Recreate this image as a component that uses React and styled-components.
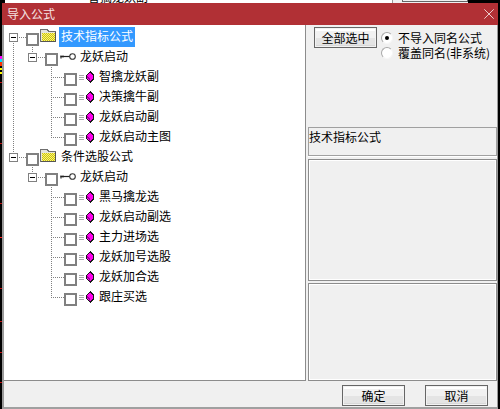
import React from 'react'
import styled, { createGlobalStyle } from 'styled-components'

const GlobalStyle = createGlobalStyle`
  html, body {
    margin: 0;
    padding: 0;
    background: #000;
    overflow: hidden;
  }
  * {
    box-sizing: border-box;
  }
`

const Screen = styled.div`
  width: 500px;
  height: 409px;
  display: flex;
  flex-direction: column;
  background: #000;
  font-family: "Noto Sans CJK SC", "Liberation Sans", sans-serif;
  font-size: 12px;
  color: #000;
  overflow: hidden;
`

/* what peeks out above the dialog */
const BehindStrip = styled.div`
  height: 3px;
  display: flex;
  align-items: flex-end;
  overflow: hidden;
  flex: none;
`
const BehindWhite = styled.div`
  width: 387px;
  margin-left: 5px;
  height: 3px;
  background: #fff;
  display: flex;
  align-items: flex-end;
  padding-left: 83px;
`
const BehindText = styled.span`
  line-height: 12px;
  height: 12px;
  flex: none;
`
const BehindGrey = styled.div`
  width: 76px;
  height: 3px;
  background: #f0f0f0;
  border-left: 1px solid #999;
  padding-left: 9px;
`
const BehindButton = styled.div`
  width: 66px;
  height: 2px;
  border: 1px solid #666;
  border-top: 0;
`

const Desk = styled.div`
  flex: 1;
  display: flex;
  min-height: 0;
`
const Rail = styled.div`
  width: 2px;
  flex: none;
  display: flex;
  flex-direction: column;
`
const RailMark = styled.div`
  height: ${p => p.$h}px;
  margin-top: ${p => p.$gap}px;
  background: ${p => p.$color};
  flex: none;
`

const Dialog = styled.div`
  width: 496px;
  flex: none;
  display: flex;
  flex-direction: column;
  background: #f0f0f0;
  border-left: 2px solid #9a9a9a;
  border-right: 1px solid #9a9a9a;
  border-bottom: 2px solid #a0a0a0;
`
const TitleBar = styled.div`
  height: 22px;
  flex: none;
  margin-left: -2px;
  margin-right: -1px;
  background: #b13035;
  color: #f6e4e4;
  display: flex;
  align-items: center;
  justify-content: space-between;
  padding: 0 4px 0 5px;
  line-height: 22px;
`
const CloseIcon = styled.svg`
  width: 10px;
  height: 10px;
  display: block;
`

const Main = styled.div`
  height: 356px;
  flex: none;
  display: flex;
`
const TreePanel = styled.div`
  width: 302px;
  flex: none;
  background: #fff;
  border-right: 1px solid #8c8c8c;
  border-bottom: 1px solid #8c8c8c;
  padding-top: 2px;
`
const Row = styled.div`
  display: flex;
  height: 20px;
`
const dots = 'repeating-linear-gradient(to bottom, #808080 0 1px, transparent 1px 2px)'
const dotsAcross = 'repeating-linear-gradient(to right, #808080 0 1px, transparent 1px 2px)'

const Guide = styled.div`
  width: ${p => (p.$across ? 22 : 19)}px;
  height: 20px;
  flex: none;
  display: flex;
  align-items: center;
  padding-left: 5px;
  background-repeat: no-repeat;
  background-image: ${p =>
    [
      p.$vertical && dots,
      p.$across && dotsAcross,
    ]
      .filter(Boolean)
      .join(', ') || 'none'};
  background-size: ${p =>
    [
      p.$vertical && `1px ${p.$vertical === 'full' ? 20 : 10}px`,
      p.$across && '13px 1px',
    ]
      .filter(Boolean)
      .join(', ') || 'auto'};
  background-position: ${p =>
    [
      p.$vertical && `9px ${p.$vertical === 'down' ? 10 : 0}px`,
      p.$across && '9px 10px',
    ]
      .filter(Boolean)
      .join(', ') || '0 0'};
`
const Expander = styled.div`
  width: 9px;
  height: 9px;
  background: #fff;
  border: 1px solid #808080;
  display: flex;
  align-items: center;
  justify-content: center;
  &::after {
    content: '';
    width: 5px;
    height: 1px;
    background: #000;
  }
`
const CheckBox = styled.div`
  width: 13px;
  height: 13px;
  flex: none;
  margin-top: 6px;
  background: #fff;
  border: 2px solid #808080;
`
const IconSlot = styled.div`
  width: 20px;
  height: 20px;
  flex: none;
  display: flex;
  align-items: ${p => (p.$top ? 'flex-start' : 'center')};
  padding: ${p => p.$pad || 0};
`
const Label = styled.span`
  height: 20px;
  line-height: 18px;
  padding: 0 2px;
  white-space: nowrap;
  background: ${p => (p.$selected ? '#3399ff' : 'transparent')};
  color: ${p => (p.$selected ? '#fff' : '#000')};
`

const FolderIcon = () => (
  <svg width="16" height="13" viewBox="0 0 16 13" shapeRendering="crispEdges">
    <defs>
      <pattern id="dither" width="2" height="2" patternUnits="userSpaceOnUse">
        <rect width="2" height="2" fill="#ffff66" />
        <rect width="1" height="1" fill="#c8b820" />
        <rect x="1" y="1" width="1" height="1" fill="#c8b820" />
      </pattern>
    </defs>
    <path d="M1 .5h6l2 2h6.500v10H.5V1z" fill="#e4e4dc" stroke="#6e6e6e" />
    <rect x="2" y="4" width="13" height="8" fill="url(#dither)" />
    <path d="M1 12.500h14.500V3" fill="none" stroke="#555" />
  </svg>
)

const KeyIcon = () => (
  <svg width="16" height="8" viewBox="0 0 16 8">
    <path d="M1 2.500v3M3 2.500v2" stroke="#222" strokeWidth="1.200" />
    <path d="M.5 3.500h9.500" stroke="#222" strokeWidth="1.200" />
    <circle cx="12.500" cy="3.500" r="2.800" fill="#fff" stroke="#333" strokeWidth="1.100" />
  </svg>
)

const FormulaIcon = () => (
  <svg width="16" height="12" viewBox="0 0 16 12" shapeRendering="crispEdges">
    <path d="M0 4.500h5M0 6.500h5M0 8.500h5" stroke="#a8a8a8" />
    <path d="M11 0l4 4v4l-4 4-4-4V4z" fill="#1a1a1a" />
    <path d="M11 1.500L14 4.500v3L11 10.500 8 7.500v-3z" fill="#ff00ee" />
    <path d="M8 5h1v1h1v1h1v3h-1V8H9V7H8z" fill="#a000a0" />
  </svg>
)

const CloseGlyph = () => (
  <CloseIcon viewBox="0 0 10 10">
    <path d="M.3.3l9.400 9.400M9.700.3L.3 9.700" stroke="#eccccc" strokeWidth="1" />
  </CloseIcon>
)

const SidePanel = styled.div`
  flex: 1;
  min-width: 0;
  display: flex;
  flex-direction: column;
  padding-left: 2px;
`
const OptionsArea = styled.div`
  height: 102px;
  flex: none;
  display: flex;
  align-items: flex-start;
  padding: 2px 0 0 6px;
`
const PushButton = styled.button`
  width: 63px;
  height: 21px;
  flex: none;
  padding: 0;
  font: inherit;
  line-height: 17px;
  color: #000;
  border: 1px solid #666;
  background: linear-gradient(#fff 0 3px, #f1f1f1 3px 10px, #e4e4e4 10px 17px, #d8d8d8 17px);
  box-shadow: inset 0 0 0 1px #f2f2f2;
`
const RadioGroup = styled.div`
  margin-left: 4px;
  display: flex;
  flex-direction: column;
  padding-top: 3px;
`
const RadioRow = styled.label`
  height: 15px;
  line-height: 15px;
  display: flex;
  align-items: center;
  gap: 5px;
  white-space: nowrap;
`
const RadioDot = styled.span`
  width: 12px;
  height: 12px;
  flex: none;
  border-radius: 50%;
  background: #fff;
  border: 1.5px solid;
  border-color: #a8a8a8 #f6f6f6 #f6f6f6 #a8a8a8;
  display: flex;
  align-items: center;
  justify-content: center;
  &::after {
    content: '';
    width: 4px;
    height: 4px;
    border-radius: 50%;
    background: ${p => (p.$on ? '#000' : 'transparent')};
  }
`
const InfoBox = styled.div`
  height: 29px;
  flex: none;
  border: 1px solid #a0a0a0;
  box-shadow: 0 1px 0 #fff;
  line-height: 18px;
`
const EmptyBox = styled.div`
  height: ${p => p.$h}px;
  flex: none;
  margin-top: ${p => p.$gap}px;
  border: 1px solid #8c8c8c;
  box-shadow: inset 0 0 0 1px #fff;
`
const Footer = styled.div`
  flex: 1;
  display: flex;
  align-items: flex-start;
  justify-content: flex-end;
  gap: 20px;
  padding: 4px 9px 0 0;
`

const railMarks = [
  { gap: 53, h: 3, color: '#ff00ff' },
  { gap: 0, h: 3, color: '#00e0ff' },
  { gap: 0, h: 4, color: '#ff3000' },
  { gap: 2, h: 2, color: '#ffff00' },
  { gap: 2, h: 2, color: '#ffff00' },
  { gap: 8, h: 1, color: '#c01010' },
  { gap: 60, h: 1, color: '#c01010' },
  { gap: 59, h: 1, color: '#c01010' },
  { gap: 33, h: 1, color: '#ff2020' },
  { gap: 50, h: 1, color: '#c01010' },
  { gap: 32, h: 1, color: '#c01010' },
  { gap: 30, h: 1, color: '#c01010' },
  { gap: 29, h: 1, color: '#c01010' },
]

const groups = [
  {
    name: '技术指标公式',
    selected: true,
    last: false,
    items: ['智擒龙妖副', '决策擒牛副', '龙妖启动副', '龙妖启动主图'],
  },
  {
    name: '条件选股公式',
    last: true,
    items: ['黑马擒龙选', '龙妖启动副选', '主力进场选', '龙妖加号选股', '龙妖加合选', '跟庄买选'],
  },
]

const TreeGroup = ({ group }) => {
  const pipe = group.last ? null : 'full'
  return (
    <>
      <Row>
        <Guide $across $vertical={group.last ? 'up' : 'down'}>
          <Expander />
        </Guide>
        <CheckBox />
        <IconSlot $top $pad="2px 0 0 1px">
          <FolderIcon />
        </IconSlot>
        <Label $selected={group.selected}>{group.name}</Label>
      </Row>
      <Row>
        <Guide $vertical={pipe} />
        <Guide $across $vertical="up">
          <Expander />
        </Guide>
        <CheckBox />
        <IconSlot $pad="0 0 0 2px">
          <KeyIcon />
        </IconSlot>
        <Label>龙妖启动</Label>
      </Row>
      {group.items.map((item, i) => (
        <Row key={item}>
          <Guide $vertical={pipe} />
          <Guide />
          <Guide $across $vertical={i === group.items.length - 1 ? 'up' : 'full'} />
          <CheckBox />
          <IconSlot $pad="0 0 0 2px">
            <FormulaIcon />
          </IconSlot>
          <Label>{item}</Label>
        </Row>
      ))}
    </>
  )
}

export default function App() {
  return (
    <Screen>
      <GlobalStyle />
      <BehindStrip>
        <BehindWhite>
          <BehindText>智擒龙妖副</BehindText>
        </BehindWhite>
        <BehindGrey>
          <BehindButton />
        </BehindGrey>
      </BehindStrip>
      <Desk>
        <Rail>
          {railMarks.map((m, i) => (
            <RailMark key={i} $gap={m.gap} $h={m.h} $color={m.color} />
          ))}
        </Rail>
        <Dialog>
          <TitleBar>
            <span>导入公式</span>
            <CloseGlyph />
          </TitleBar>
          <Main>
            <TreePanel>
              {groups.map(g => (
                <TreeGroup key={g.name} group={g} />
              ))}
            </TreePanel>
            <SidePanel>
              <OptionsArea>
                <PushButton>全部选中</PushButton>
                <RadioGroup>
                  <RadioRow>
                    <RadioDot $on />
                    不导入同名公式
                  </RadioRow>
                  <RadioRow>
                    <RadioDot />
                    覆盖同名(非系统)
                  </RadioRow>
                </RadioGroup>
              </OptionsArea>
              <InfoBox>技术指标公式</InfoBox>
              <EmptyBox $gap={3} $h={122} />
              <EmptyBox $gap={2} $h={98} />
            </SidePanel>
          </Main>
          <Footer>
            <PushButton>确定</PushButton>
            <PushButton>取消</PushButton>
          </Footer>
        </Dialog>
      </Desk>
    </Screen>
  )
}
